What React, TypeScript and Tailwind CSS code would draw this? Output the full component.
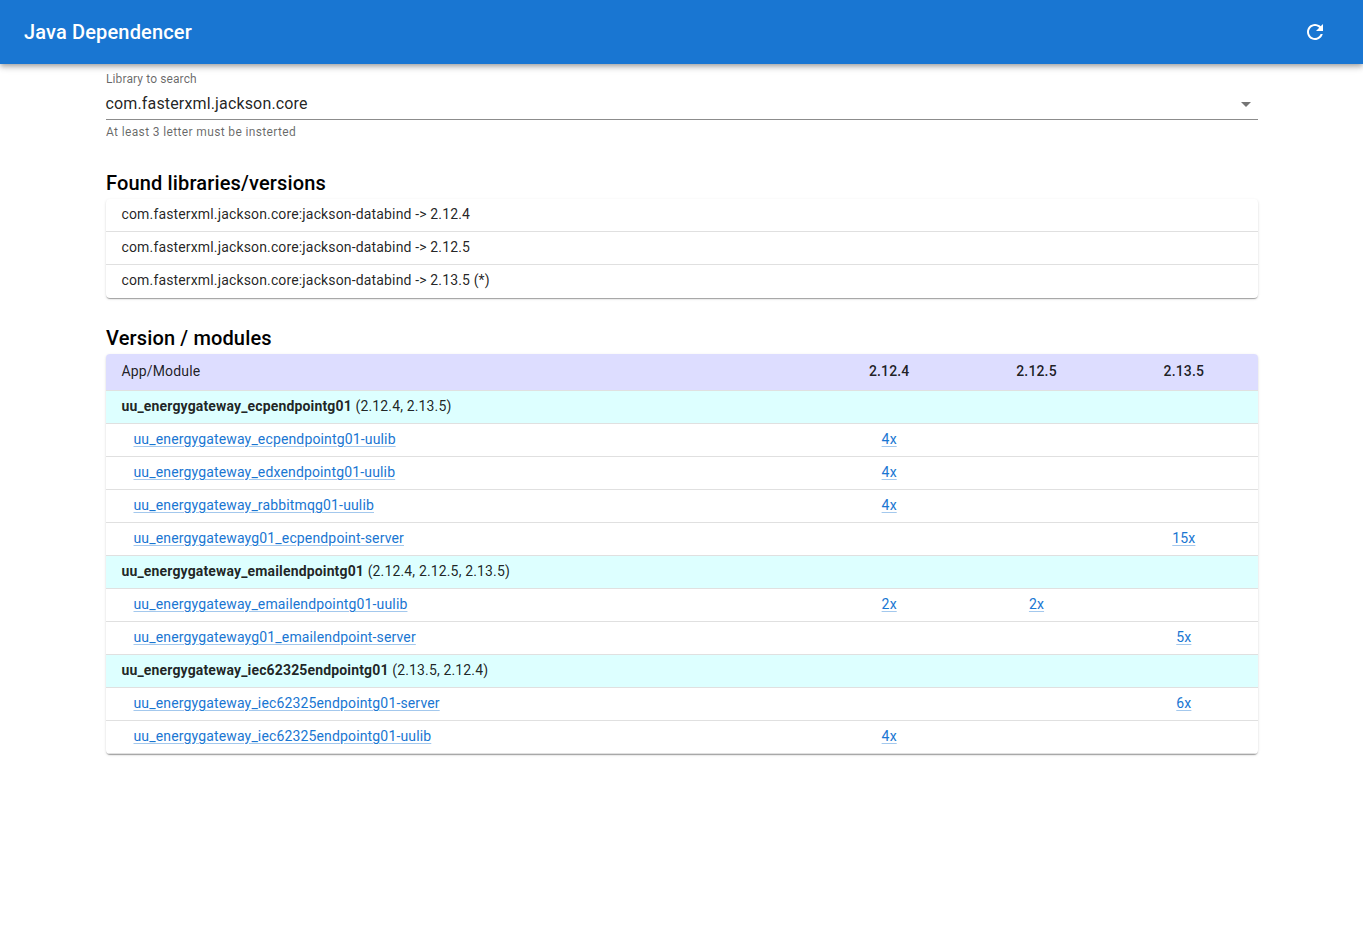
const data: { name: string; versions: string; rows: { name: string; cells: [string, string, string] }[] }[] = [
  {
    name: "uu_energygateway_ecpendpointg01",
    versions: "(2.12.4, 2.13.5)",
    rows: [
      { name: "uu_energygateway_ecpendpointg01-uulib", cells: ["4x", "", ""] },
      { name: "uu_energygateway_edxendpointg01-uulib", cells: ["4x", "", ""] },
      { name: "uu_energygateway_rabbitmqg01-uulib", cells: ["4x", "", ""] },
      { name: "uu_energygatewayg01_ecpendpoint-server", cells: ["", "", "15x"] },
    ],
  },
  {
    name: "uu_energygateway_emailendpointg01",
    versions: "(2.12.4, 2.12.5, 2.13.5)",
    rows: [
      { name: "uu_energygateway_emailendpointg01-uulib", cells: ["2x", "2x", ""] },
      { name: "uu_energygatewayg01_emailendpoint-server", cells: ["", "", "5x"] },
    ],
  },
  {
    name: "uu_energygateway_iec62325endpointg01",
    versions: "(2.13.5, 2.12.4)",
    rows: [
      { name: "uu_energygateway_iec62325endpointg01-server", cells: ["", "", "6x"] },
      { name: "uu_energygateway_iec62325endpointg01-uulib", cells: ["4x", "", ""] },
    ],
  },
];

const libs = [
  "com.fasterxml.jackson.core:jackson-databind -> 2.12.4",
  "com.fasterxml.jackson.core:jackson-databind -> 2.12.5",
  "com.fasterxml.jackson.core:jackson-databind -> 2.13.5 (*)",
];

const link = "text-[#1976d2] underline decoration-[#1976d266] underline-offset-[2px]";
const paper =
  "rounded shadow-[0_2px_1px_-1px_rgba(0,0,0,0.2),0_1px_1px_0_rgba(0,0,0,0.14),0_1px_3px_0_rgba(0,0,0,0.12)]";
const base = "border-b border-[#e0e0e0] px-4 text-sm leading-5 tracking-[0.01071em] text-[#000000de]";
const cell = `${base} pt-[5px] pb-[7px]`;
const headCell = `${base} pt-[7px] pb-[9px]`;

export default function App() {
  return (
    <div className="min-h-[947px] bg-white font-['Roboto',sans-serif]">
      <header className="flex h-16 items-center justify-between bg-[#1976d2] pl-6 pr-9 text-white shadow-[0_2px_4px_-1px_rgba(0,0,0,0.2),0_4px_5px_0_rgba(0,0,0,0.14),0_1px_10px_0_rgba(0,0,0,0.12)]">
        <h1 className="text-xl font-medium tracking-[0.0075em]">Java Dependencer</h1>
        <svg viewBox="0 0 24 24" className="h-6 w-6 fill-white">
          <path d="M17.65 6.35C16.2 4.9 14.21 4 12 4c-4.42 0-7.99 3.58-7.99 8s3.57 8 7.99 8c3.73 0 6.84-2.55 7.73-6h-2.08c-.82 2.33-3.04 4-5.65 4-3.31 0-6-2.69-6-6s2.69-6 6-6c1.66 0 3.14.69 4.22 1.78L13 11h7V4l-2.35 2.35z" />
        </svg>
      </header>

      <main className="mx-auto w-[1152px]">
        <div className="pt-[7px]">
          <label className="block pl-[0.5px] text-xs leading-[16px] tracking-[0.00938em] text-[#00000099]">Library to search</label>
          <div className="flex h-[33px] items-center justify-between border-b border-[#00000073] pt-[2px]">
            <span className="text-base leading-6 tracking-[0.00938em] text-[#000000de]">com.fasterxml.jackson.core</span>
            <svg viewBox="0 0 24 24" className="h-6 w-6 fill-[#0000008a]">
              <path d="M7 10l5 5 5-5z" />
            </svg>
          </div>
          <p className="mt-[2px] pl-[0.5px] text-xs leading-5 tracking-[0.03em] text-[#00000099]">At least 3 letter must be insterted</p>
        </div>

        <h2 className="mt-[25px] pl-[0.5px] text-xl leading-8 font-medium tracking-[0.0075em] text-black">Found libraries/versions</h2>
        <ul className={`${paper} bg-white`}>
          {libs.map((l, i) => (
            <li key={l} className={`${cell} ${i === libs.length - 1 ? "border-b-0 pb-[8px]" : ""}`}>
              {l}
            </li>
          ))}
        </ul>

        <h2 className="mt-[24px] pl-[0.5px] text-xl leading-8 font-medium tracking-[0.0075em] text-black">Version / modules</h2>
        <div className={`${paper} overflow-hidden bg-white`}>
          <table className="w-full table-fixed border-collapse">
            <colgroup>
              <col />
              <col className="w-[147.33px]" />
              <col className="w-[147.33px]" />
              <col className="w-[147.33px]" />
            </colgroup>
            <thead>
              <tr className="bg-[#ddddff]">
                <th className={`${headCell} text-left font-normal`}>App/Module</th>
                <th className={`${headCell} text-center font-medium`}>2.12.4</th>
                <th className={`${headCell} text-center font-medium`}>2.12.5</th>
                <th className={`${headCell} text-center font-medium`}>2.13.5</th>
              </tr>
            </thead>
            <tbody>
              {data.map((g) => [
                <tr key={g.name} className="bg-[#ddffff]">
                  <td colSpan={4} className={cell}>
                    <b className="font-bold">{g.name}</b> {g.versions}
                  </td>
                </tr>,
                ...g.rows.map((r) => (
                  <tr key={r.name}>
                    <td className={`${cell} pl-7`}>
                      <a className={link}>{r.name}</a>
                    </td>
                    {r.cells.map((c, i) => (
                      <td key={i} className={`${cell} text-center`}>
                        {c && <a className={link}>{c}</a>}
                      </td>
                    ))}
                  </tr>
                )),
              ])}
            </tbody>
          </table>
        </div>
      </main>
    </div>
  );
}
